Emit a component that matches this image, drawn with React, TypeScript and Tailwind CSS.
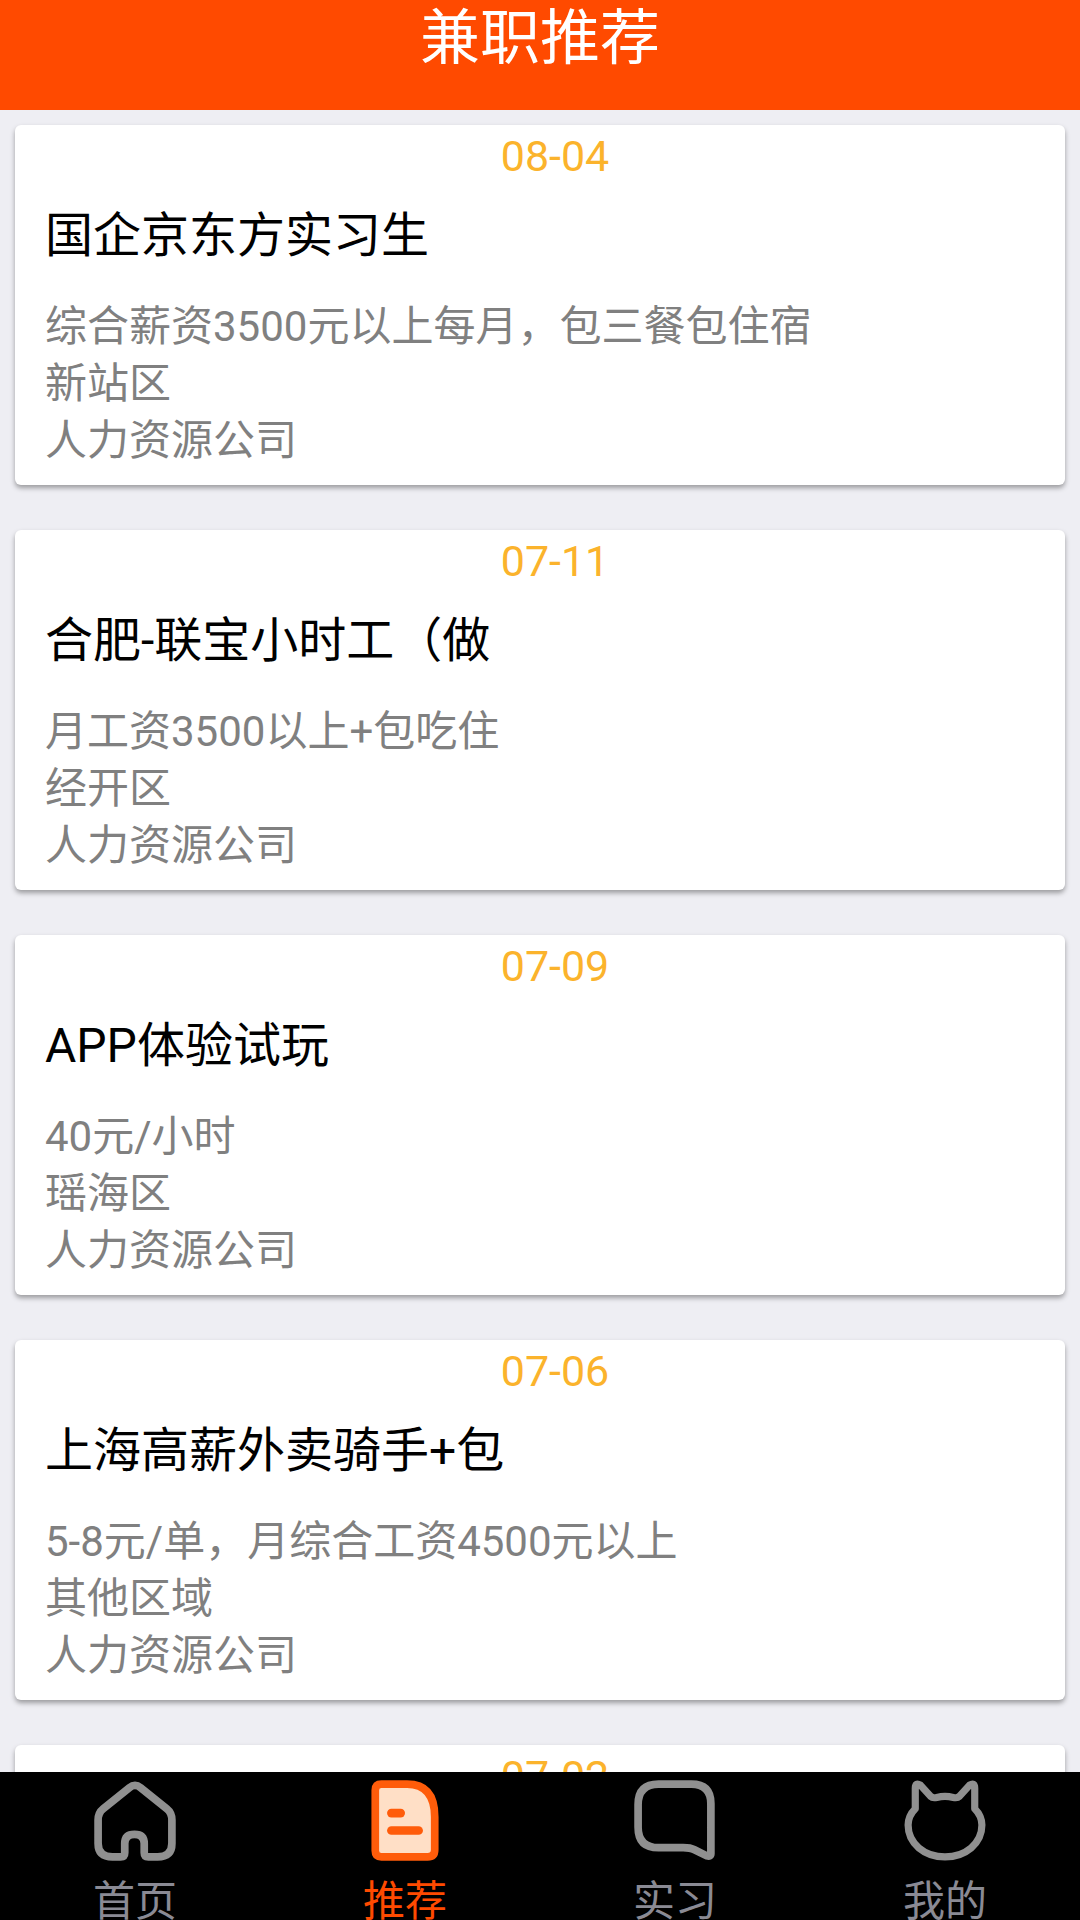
const font = '[font-family:Roboto,"Noto_Sans_CJK_SC",sans-serif]';

interface Job {
  date: string;
  title: string;
  salary: string;
  area: string;
  company: string;
}

const jobs: Job[] = [
  { date: '08-04', title: '国企京东方实习生', salary: '综合薪资3500元以上每月，包三餐包住宿', area: '新站区', company: '人力资源公司' },
  { date: '07-11', title: '合肥-联宝小时工（做', salary: '月工资3500以上+包吃住', area: '经开区', company: '人力资源公司' },
  { date: '07-09', title: 'APP体验试玩', salary: '40元/小时', area: '瑶海区', company: '人力资源公司' },
  { date: '07-06', title: '上海高薪外卖骑手+包', salary: '5-8元/单，月综合工资4500元以上', area: '其他区域', company: '人力资源公司' },
  { date: '07-02', title: '', salary: '', area: '', company: '' },
];

function JobCard({ job }: { job: Job }) {
  return (
    <div className="h-[360px] shrink-0 rounded-[6px] bg-white pl-[30px] shadow-[0_3px_5px_rgba(0,0,0,0.35)]">
      <div className="h-[50px] text-center text-[43px] leading-[63px] text-[#fbb32c]">{job.date}</div>
      <div className="mt-[31px] h-[60px] text-[48px] leading-[60px] whitespace-nowrap text-black">{job.title}</div>
      <div className="mt-[32px] text-[42px] leading-[57px] text-[#808080]">
        <div className="h-[57px] whitespace-nowrap">{job.salary}</div>
        <div className="h-[57px] whitespace-nowrap">{job.area}</div>
        <div className="h-[57px] whitespace-nowrap">{job.company}</div>
      </div>
    </div>
  );
}

function HomeIcon() {
  return (
    <svg width="82" height="82" viewBox="0 0 80 80" fill="none">
      <path
        d="M34.5 7.5 Q40 3 45.5 7.5 L71 28 Q76 32 76 39 V62 Q76 75 62 75 H53 Q49 75 49 71 V62 Q49 53 39.5 53 Q30 53 30 62 V71 Q30 75 26 75 H18 Q4 75 4 62 V39 Q4 32 9 28 Z"
        stroke="#909090"
        strokeWidth="7.5"
        strokeLinejoin="round"
      />
    </svg>
  );
}

function DocIcon() {
  return (
    <svg width="82" height="82" viewBox="0 0 80 80" fill="none">
      <path
        d="M17 4 H42 Q69 4 69 36 V68 Q69 75 62 75 H17 Q11 75 11 69 V10 Q11 4 17 4 Z"
        fill="#ffdfc6"
        stroke="#ff5c0a"
        strokeWidth="7.5"
      />
      <rect x="22.5" y="28" width="17.5" height="8.5" rx="4.25" fill="#ff5c0a" />
      <rect x="22.5" y="45" width="35" height="8.5" rx="4.25" fill="#ff5c0a" />
    </svg>
  );
}

function ChatIcon() {
  return (
    <svg width="82" height="82" viewBox="0 0 80 80" fill="none">
      <path
        d="M24 4 H56 Q75 4 75 23 V72 Q75 75 71 74 L59 68 Q55 66 48 66 H24 Q4 66 4 46 V24 Q4 4 24 4 Z"
        stroke="#909090"
        strokeWidth="7.5"
        strokeLinejoin="round"
      />
    </svg>
  );
}

function CatIcon() {
  return (
    <svg width="82" height="82" viewBox="0 0 80 80" fill="none">
      <path
        d="M11 8 Q11 2 16 5 L26 16 Q28 18 32 17 Q40 15 48 17 Q52 18 54 16 L64 5 Q69 2 69 8 L69 28 Q76 35 76 44 C76 62 60 75 40 75 C20 75 4 62 4 44 Q4 35 11 28 Z"
        stroke="#909090"
        strokeWidth="7"
        strokeLinejoin="round"
      />
    </svg>
  );
}

function Tab({ label, active, icon }: { label: string; active?: boolean; icon: React.ReactNode }) {
  return (
    <div className="flex flex-1 flex-col items-center pt-[8px]">
      <div className="shrink-0">{icon}</div>
      <div className={`mt-[16px] shrink-0 text-[42px] leading-[48px] whitespace-nowrap ${active ? 'text-[#ff4a00]' : 'text-[#8a8a94]'}`}>
        {label}
      </div>
    </div>
  );
}

export default function App() {
  return (
    <div className={`flex h-[1920px] w-[1080px] flex-col overflow-hidden bg-[#eeeef3] ${font}`}>
      <div className="h-[110px] shrink-0 bg-[#ff4a00] text-center text-[60px] leading-[78px] text-white">兼职推荐</div>

      <div className="flex min-h-0 flex-1 flex-col gap-[45px] overflow-hidden px-[15px] pt-[15px]">
        {jobs.map((job) => (
          <JobCard key={job.date} job={job} />
        ))}
      </div>

      <div className="flex h-[148px] shrink-0 overflow-hidden bg-black">
        <Tab label="首页" icon={<HomeIcon />} />
        <Tab label="推荐" active icon={<DocIcon />} />
        <Tab label="实习" icon={<ChatIcon />} />
        <Tab label="我的" icon={<CatIcon />} />
      </div>
    </div>
  );
}
